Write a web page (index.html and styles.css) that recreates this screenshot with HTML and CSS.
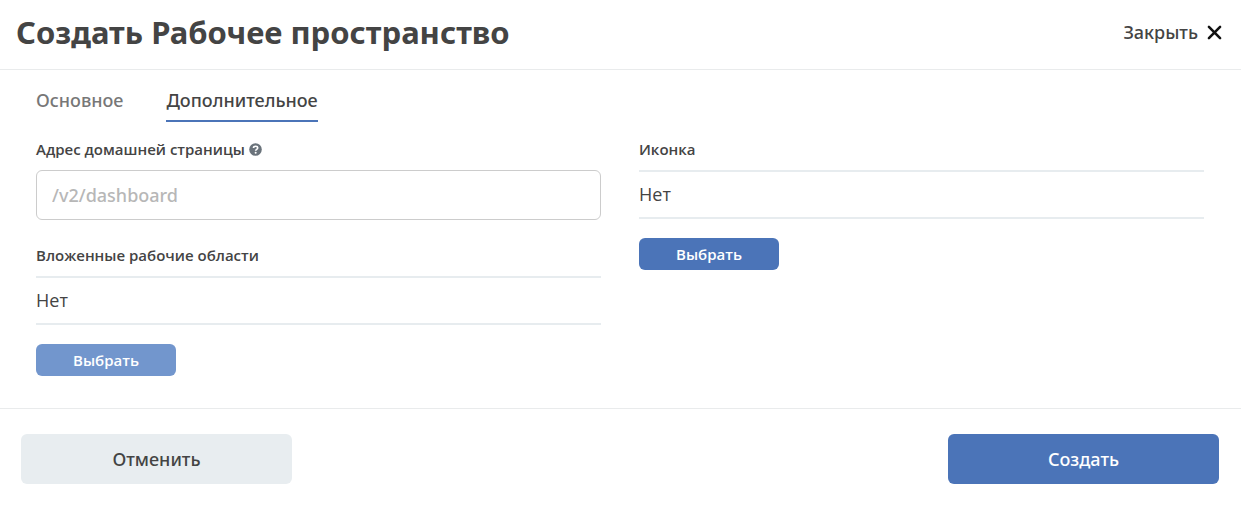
FILE: index.html
```
<!DOCTYPE html>
<html lang="ru">
<head>
<meta charset="utf-8">
<meta name="viewport" content="width=device-width, initial-scale=1">
<title>Создать Рабочее пространство</title>
<link rel="stylesheet" href="styles.css">
</head>
<body>
<form class="dialog">
  <header class="header">
    <h1 class="title">Создать Рабочее пространство</h1>
    <button class="close" type="button">Закрыть
      <svg class="close-icon" viewBox="0 0 14 14" aria-hidden="true"><path d="M1.8 1.8l10.4 10.4M12.2 1.8l-10.4 10.4"/></svg>
    </button>
  </header>
  <main class="content">
    <nav class="tabs">
      <button class="tab" type="button">Основное</button>
      <button class="tab tab-active" type="button">Дополнительное</button>
    </nav>
    <div class="columns">
      <div class="column">
        <section class="field">
          <div class="caption"><label for="address">Адрес домашней страницы</label>
            <svg class="help" viewBox="0 0 512 512" aria-hidden="true"><circle cx="256" cy="256" r="248"/><path class="help-mark" d="M176 196c8-88 166-88 166 0 0 56-80 50-80 112"/><circle class="help-dot" cx="262" cy="382" r="40"/></svg>
          </div>
          <input class="input" id="address" type="text" placeholder="/v2/dashboard">
        </section>
        <section class="field">
          <h2 class="caption">Вложенные рабочие области</h2>
          <p class="value">Нет</p>
          <button class="select select-muted" type="button">Выбрать</button>
        </section>
      </div>
      <div class="column">
        <section class="field">
          <h2 class="caption">Иконка</h2>
          <p class="value">Нет</p>
          <button class="select" type="button">Выбрать</button>
        </section>
      </div>
    </div>
  </main>
  <footer class="footer">
    <button class="action cancel" type="button">Отменить</button>
    <button class="action create" type="submit">Создать</button>
  </footer>
</form>
</body>
</html>
```
FILE: styles.css
```
* { box-sizing: border-box; }
body { margin: 0; background: #fff; color: #444; font-family: "Noto Sans", "Open Sans", sans-serif; }
h1, h2, p { margin: 0; }
button { padding: 0; border: 0; background: none; color: inherit; font: inherit; cursor: pointer; }
.header { display: flex; align-items: center; justify-content: space-between; height: 70px; padding: 0 19px 5px 16px; border-bottom: 1px solid #e9ebec; }
.title { font-size: 31px; line-height: 40px; font-weight: 700; }
.close { display: flex; align-items: center; gap: 9px; font-size: 18px; line-height: 24px; font-weight: 500; }
.close-icon { width: 15px; height: 15px; fill: none; stroke: #111; stroke-width: 2.4; stroke-linecap: round; }
.content { padding: 18px 37px 32px 36px; }
.tabs { display: flex; gap: 43px; }
.tab { padding: 0 0 8px; border-bottom: 2px solid transparent; color: #777; font-size: 18px; line-height: 24px; font-weight: 500; }
.tab-active { border-color: #4b74b8; color: #444; }
.columns { display: grid; grid-template-columns: 1fr 1fr; gap: 38px; padding-top: 17px; }
.column { display: flex; flex-direction: column; gap: 25px; }
.caption { display: flex; align-items: center; gap: 4px; margin-bottom: 11px; font-family: "Open Sans", sans-serif; font-size: 15px; line-height: 20px; font-weight: 600; }
.help { width: 13px; height: 13px; fill: #6a737b; }
.help-mark { fill: none; stroke: #fff; stroke-width: 64; }
.help-dot { fill: #fff; }
.input { display: block; width: 100%; height: 50px; padding: 0 15px; border: 1px solid #ccc; border-radius: 6px; background: #fff; color: #444; font: 500 18px/24px "Noto Sans", "Open Sans", sans-serif; }
.input::placeholder { color: #b7b7b7; opacity: 1; }
.value { padding: 10px 0 11px; border: solid #e7ecef; border-width: 2px 0; font-family: "Open Sans", sans-serif; font-size: 18px; line-height: 24px; }
.select { display: block; width: 140px; height: 32px; margin-top: 19px; border-radius: 6px; background: #4b74b8; color: #fff; font-family: "Open Sans", sans-serif; font-size: 15px; line-height: 20px; font-weight: 600; }
.select-muted { background: #7296cd; }
.footer { display: flex; justify-content: space-between; padding: 25px 22px 39px 21px; border-top: 1px solid #e9ebec; }
.action { width: 271px; height: 50px; border-radius: 6px; font-size: 18px; font-weight: 500; }
.cancel { background: #e8edf0; }
.create { background: #4b74b8; color: #fff; }
```
